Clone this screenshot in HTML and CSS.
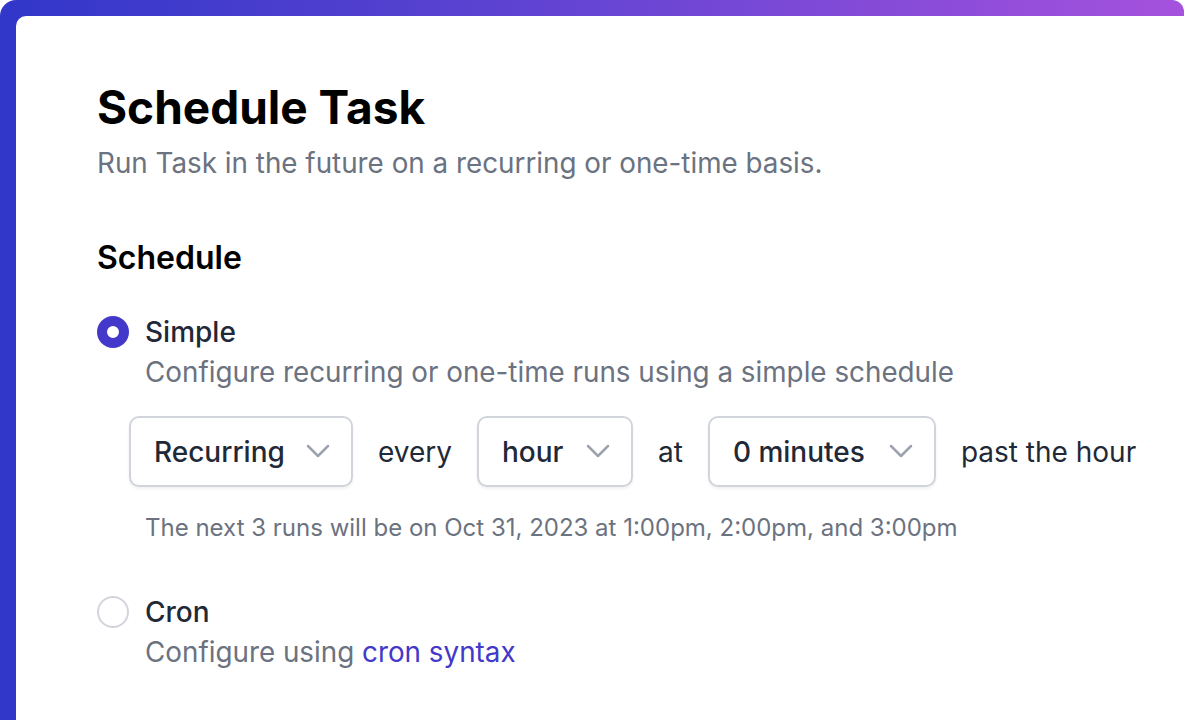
FILE: index.html
```html
<!DOCTYPE html>
<html lang="en">
<head>
<meta charset="utf-8">
<title>Schedule Task</title>
<link rel="stylesheet" href="styles.css">
</head>
<body>
<div class="frame">
  <div class="card">
    <h1 class="title">Schedule Task</h1>
    <p class="subtitle">Run Task in the future on a recurring or one-time basis.</p>
    <h2 class="section">Schedule</h2>

    <div class="option">
      <span class="radio radio-on"></span>
      <div class="option-body">
        <div class="option-label">Simple</div>
        <div class="option-desc">Configure recurring or one-time runs using a simple schedule</div>
        <div class="builder">
          <div class="select sel-recurring"><span>Recurring</span><svg class="chev" viewBox="0 0 20 20"><path d="M5 7l5 5 5-5" fill="none" stroke="currentColor" stroke-width="1.25" stroke-linecap="round" stroke-linejoin="round"/></svg></div>
          <span class="word">every</span>
          <div class="select sel-hour"><span>hour</span><svg class="chev" viewBox="0 0 20 20"><path d="M5 7l5 5 5-5" fill="none" stroke="currentColor" stroke-width="1.25" stroke-linecap="round" stroke-linejoin="round"/></svg></div>
          <span class="word">at</span>
          <div class="select sel-min"><span>0 minutes</span><svg class="chev" viewBox="0 0 20 20"><path d="M5 7l5 5 5-5" fill="none" stroke="currentColor" stroke-width="1.25" stroke-linecap="round" stroke-linejoin="round"/></svg></div>
          <span class="word">past the hour</span>
        </div>
        <div class="note">The next 3 runs will be on Oct 31, 2023 at 1:00pm, 2:00pm, and 3:00pm</div>
      </div>
    </div>

    <div class="option option-cron">
      <span class="radio"></span>
      <div class="option-body">
        <div class="option-label">Cron</div>
        <div class="option-desc">Configure using <a class="link" href="#">cron syntax</a></div>
      </div>
    </div>
  </div>
</div>
</body>
</html>
```

FILE: styles.css
```css
* { box-sizing: border-box; }
html, body { margin: 0; padding: 0; background: #ffffff; }
body {
  font-family: Inter, "Noto Sans", "Liberation Sans", sans-serif;
  width: 1184px;
  height: 720px;
  overflow: hidden;
}
.frame {
  height: 720px;
  padding: 16px 0 0 16px;
  background: linear-gradient(90deg, #3137c9 0%, #5a42d1 40%, #a552dd 100%);
  border-radius: 16px 12px 0 0;
  display: flex;
}
.card {
  flex: 1;
  background: #ffffff;
  border-top-left-radius: 10px;
  padding: 63px 0 0 81px;
}
.title {
  margin: 0;
  font-size: 46px;
  line-height: 56px;
  font-weight: 700;
  color: #000000;
}
.subtitle {
  margin: 10px 0 0;
  font-size: 27.8px;
  line-height: 36px;
  color: #6b7280;
}
.section {
  margin: 57px 0 0;
  font-size: 32px;
  line-height: 40px;
  font-weight: 600;
  color: #000000;
}
.option {
  display: flex;
  gap: 16px;
  margin-top: 34px;
}
.option-cron { margin-top: 48px; }
.radio {
  flex: none;
  width: 32px;
  height: 32px;
  border-radius: 50%;
  border: 2px solid #d1d5db;
  background: #ffffff;
  margin-top: 4px;
}
.radio-on {
  border: 10px solid #4338ca;
  background: #ffffff;
}
.option-body { display: flex; flex-direction: column; }
.option-label {
  font-size: 28px;
  line-height: 40px;
  font-weight: 500;
  color: #1f2937;
}
.option-desc {
  font-size: 27.8px;
  line-height: 40px;
  color: #6b7280;
}
.link { color: #4338ca; text-decoration: none; }
.builder {
  display: flex;
  align-items: center;
  gap: 25px;
  margin: 24px 0 0 -16px;
}
.select {
  display: flex;
  align-items: center;
  justify-content: space-between;
  height: 71px;
  padding: 0 13px 0 23px;
  border: 2px solid #d1d5db;
  border-radius: 10px;
  background: #ffffff;
  box-shadow: 0 2px 3px rgba(0, 0, 0, 0.06);
  font-size: 28px;
  font-weight: 500;
  color: #1f2937;
}
.sel-recurring { width: 224px; }
.sel-hour { width: 156px; }
.sel-min { width: 228px; }
.chev { flex: none; width: 40px; height: 40px; color: #9ca3af; }
.word {
  font-size: 28px;
  color: #1f2937;
}
.note {
  margin-top: 25px;
  font-size: 24px;
  line-height: 32px;
  color: #6b7280;
}
```
